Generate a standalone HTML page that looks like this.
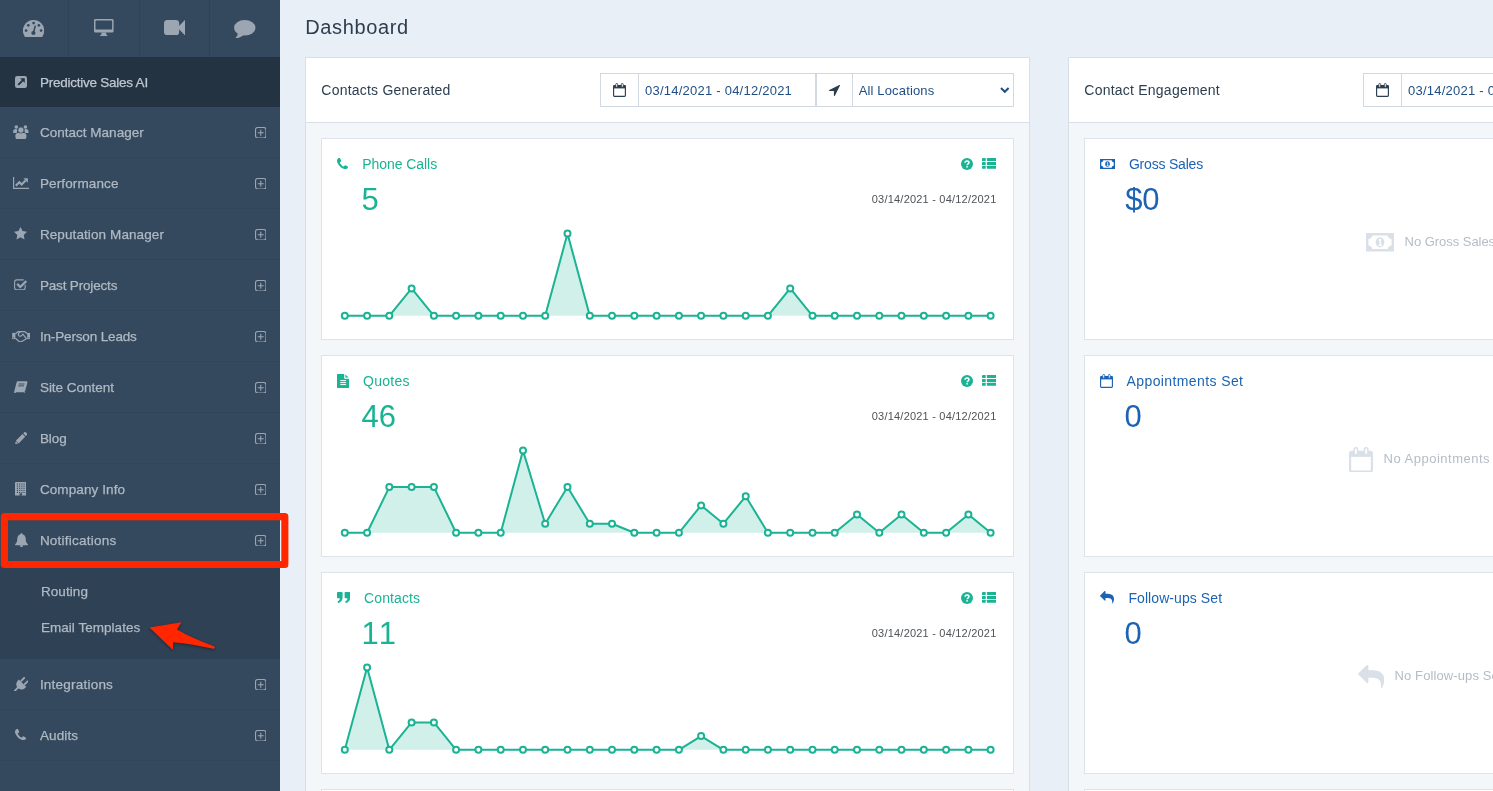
<!DOCTYPE html>
<html lang="en"><head><meta charset="utf-8"><title>Dashboard</title>
<style>
html,body{margin:0;padding:0}
body{width:1493px;height:791px;overflow:hidden;background:#e9eff6;font-family:"Liberation Sans", sans-serif;position:relative;-webkit-font-smoothing:antialiased}
*{box-sizing:border-box}
#sidebar,#main{will-change:transform}
#sidebar{position:absolute;left:0;top:0;width:280px;height:791px;background:#34495e;overflow:hidden}
.topbar{position:absolute;left:0;top:0;width:280px;height:57px}
.topbar a{position:absolute;top:0;width:70px;height:57px;border-right:1px solid #304459;display:block}
.nav-item span,.submenu span{-webkit-text-stroke:.25px currentColor}
.nav-item{position:absolute;left:0;width:280px;height:51px;border-bottom:1px solid #30445a}
.nav-item.active{background:#243342;border-bottom:none;height:50px}
.submenu{position:absolute;left:0;top:566px;width:280px;height:93px;background:#2f4155}
#main{position:absolute;left:280px;top:0;width:1213px;height:791px;overflow:hidden}
.panel{position:absolute;top:57px;width:725px;height:800px;background:#f4f7fa;border:1px solid #d8dfe7}
.panel-head{position:absolute;left:0;top:0;width:723px;height:65px;background:#fff;border-bottom:1px solid #d8dfe7}
.card{position:absolute;left:15px;width:693px;height:202px;background:#fff;border:1px solid #dce3ea}
.igroup{position:absolute;top:15px;height:34px;background:#fff;border:1px solid #d0d8e1}
</style></head><body>

<div id="sidebar">
<div class="topbar">
<a style="left:0px;width:69px;"><svg style="position:absolute;left:22.80px;top:19.90px;" width="21.2" height="17" viewBox="0 0 21.2 17"><path fill="#9ba6b2" d="M10.6 0A10.6 10.6 0 0 1 21.2 10.6c0 2.1-.6 4.1-1.7 5.8a1 1 0 0 1-.9.6H2.6a1 1 0 0 1-.9-.6A10.6 10.6 0 0 1 10.6 0z"/><g fill="#34495e"><circle cx="10.6" cy="3.1" r="1.35"/><circle cx="5.3" cy="5.3" r="1.35"/><circle cx="15.9" cy="5.3" r="1.35"/><circle cx="3.1" cy="10.6" r="1.35"/><circle cx="18.1" cy="10.6" r="1.35"/><circle cx="10.4" cy="13" r="2.1"/></g><path d="M10.5 12.6L12.2 6.2" stroke="#34495e" stroke-width="1.5" stroke-linecap="round"/></svg></a>
<a style="left:70px;"><svg style="position:absolute;left:24.40px;top:19.00px;" width="19.6" height="17.2" viewBox="0 0 19.6 17.2"><rect x="0" y="0" width="19.6" height="13.6" rx="1.5" fill="#9ba6b2"/><rect x="1.5" y="1.5" width="16.6" height="9" rx=".4" fill="#34495e"/><path fill="#9ba6b2" d="M7.6 13.6h4.4l.5 2.3h.9v1.3H6.2v-1.3h.9z"/></svg></a>
<a style="left:140px;"><svg style="position:absolute;left:24.10px;top:19.90px;" width="21.4" height="15.3" viewBox="0 0 21.4 15.3"><rect x="0" y="0" width="15.2" height="15.3" rx="3.4" fill="#9ba6b2"/><path fill="#9ba6b2" d="M14.6 6.6L20.6.3c.4-.4.8-.2.8.3v14.1c0 .5-.4.7-.8.3l-6-6.3z"/></svg></a>
<a style="left:210px;border-right:none;"><svg style="position:absolute;left:24.10px;top:19.90px;" width="21.5" height="18.4" viewBox="0 0 21.5 18.4"><ellipse cx="10.75" cy="7.7" rx="10.75" ry="7.7" fill="#9ba6b2"/><path fill="#9ba6b2" d="M4.2 12.5c-.3 2-1.300 4-2.800 5.500c-.2.200 0 .4.300.4c3.200-.3 5.800-1.600 7.800-3.400z"/></svg></a>
</div>
<div class="nav-item active" style="top:57px">
<svg style="position:absolute;left:15.00px;top:19.00px;" width="12" height="12" viewBox="0 0 12 12"><rect width="12" height="12" rx="2.2" fill="#9ba6b2"/><path fill="#243342" d="M5.200 2.300H9.800V6.900L8.200 5.300 3.900 9.600 2.500 8.200 6.800 3.900z"/></svg>
<span style="position:absolute;left:39.9px;top:15.92px;font-size:13.5px;line-height:20px;letter-spacing:-0.24px;color:#c0c8d0;white-space:nowrap;">Predictive Sales AI</span>
</div>
<div class="nav-item" style="top:107px">
<svg style="position:absolute;left:13.10px;top:17.80px;" width="15.8" height="14.4" viewBox="0 0 15.8 14.4"><g fill="#9ba6b2"><circle cx="3.300" cy="2.100" r="1.750"/><circle cx="12.400" cy="2.100" r="1.750"/><path d="M.1 6.900c0-1.700 1-2.800 2.400-2.800.9 0 1.600.3 2.100.9-.5.700-.8 1.600-.8 2.500v.6H1.400C.6 8.100.1 7.700.1 6.900z"/><path d="M15.600 6.900c0-1.700-1-2.800-2.400-2.800-.9 0-1.600.3-2.100.9.5.700.8 1.600.8 2.500v.6h2.400c.8 0 1.300-.4 1.300-1.200z"/><rect x="2.400" y="8" width="11" height="6.300" rx="2.500"/><circle cx="7.900" cy="5.100" r="3.050" stroke="#34495e" stroke-width=".7"/></g></svg>
<span style="position:absolute;left:39.9px;top:15.92px;font-size:13.5px;line-height:20px;letter-spacing:0.02px;color:#b0b9c3;white-space:nowrap;">Contact Manager</span>
<svg style="position:absolute;left:254.60px;top:19.90px;" width="11.5" height="11.5" viewBox="0 0 11.5 11.5"><rect x=".55" y=".55" width="10.400" height="10.400" rx="2.100" fill="none" stroke="#9ba6b2" stroke-width="1.100"/><path d="M5.750 2.800v5.900M2.800 5.750h5.900" stroke="#9ba6b2" stroke-width="1.100"/></svg>
</div>
<div class="nav-item" style="top:158px">
<svg style="position:absolute;left:13.00px;top:19.00px;" width="16" height="12" viewBox="0 0 16 12"><path d="M.6 0v11.300H16" fill="none" stroke="#9ba6b2" stroke-width="1.2"/><path d="M2.800 8.700L6.300 5.200l2.300 2.300L12.600 3.500" fill="none" stroke="#9ba6b2" stroke-width="2.100"/><path fill="#9ba6b2" d="M10.400 1.300h4.500v4.500z"/></svg>
<span style="position:absolute;left:39.9px;top:15.92px;font-size:13.5px;line-height:20px;letter-spacing:0.13px;color:#b0b9c3;white-space:nowrap;">Performance</span>
<svg style="position:absolute;left:254.60px;top:19.90px;" width="11.5" height="11.5" viewBox="0 0 11.5 11.5"><rect x=".55" y=".55" width="10.400" height="10.400" rx="2.100" fill="none" stroke="#9ba6b2" stroke-width="1.100"/><path d="M5.750 2.800v5.900M2.800 5.750h5.900" stroke="#9ba6b2" stroke-width="1.100"/></svg>
</div>
<div class="nav-item" style="top:209px">
<svg style="position:absolute;left:14.10px;top:18.30px;" width="13" height="12.5" viewBox="0 0 13 12.5"><path fill="#9ba6b2" d="M6.500 0l2 4.100 4.500.65-3.250 3.200.75 4.500L6.500 10.300 2.500 12.450l.75-4.500L0 4.750l4.500-.65z"/></svg>
<span style="position:absolute;left:39.9px;top:15.92px;font-size:13.5px;line-height:20px;letter-spacing:0.1px;color:#b0b9c3;white-space:nowrap;">Reputation Manager</span>
<svg style="position:absolute;left:254.60px;top:19.90px;" width="11.5" height="11.5" viewBox="0 0 11.5 11.5"><rect x=".55" y=".55" width="10.400" height="10.400" rx="2.100" fill="none" stroke="#9ba6b2" stroke-width="1.100"/><path d="M5.750 2.800v5.900M2.800 5.750h5.900" stroke="#9ba6b2" stroke-width="1.100"/></svg>
</div>
<div class="nav-item" style="top:260px">
<svg style="position:absolute;left:14.20px;top:18.60px;" width="13.2" height="11.8" viewBox="0 0 13.2 11.8"><path d="M11.200 5.700v3.100a2 2 0 0 1-2 2H2.600a2 2 0 0 1-2-2V2.900a2 2 0 0 1 2-2h7.100" fill="none" stroke="#9ba6b2" stroke-width="1.100"/><path d="M3.200 4.900l3.100 3.100L12.300 2" fill="none" stroke="#9ba6b2" stroke-width="2.300"/></svg>
<span style="position:absolute;left:39.9px;top:15.92px;font-size:13.5px;line-height:20px;letter-spacing:-0.17px;color:#b0b9c3;white-space:nowrap;">Past Projects</span>
<svg style="position:absolute;left:254.60px;top:19.90px;" width="11.5" height="11.5" viewBox="0 0 11.5 11.5"><rect x=".55" y=".55" width="10.400" height="10.400" rx="2.100" fill="none" stroke="#9ba6b2" stroke-width="1.100"/><path d="M5.750 2.800v5.900M2.800 5.750h5.900" stroke="#9ba6b2" stroke-width="1.100"/></svg>
</div>
<div class="nav-item" style="top:311px">
<svg style="position:absolute;left:11.70px;top:19.90px;" width="18.4" height="11.5" viewBox="0 0 18.4 11.5"><rect x=".2" y="1.9" width="3.2" height="6.2" fill="#9ba6b2"/><rect x="15.2" y="1.9" width="3.2" height="6.2" fill="#9ba6b2"/><circle cx="1.7" cy="6.7" r=".55" fill="#34495e"/><circle cx="16.9" cy="6.7" r=".55" fill="#34495e"/><path d="M3.4 2.7L5.9.7H13L15.3 2.7M3.4 7.3L6.9 10.2c.9.7 2.300.7 3.200 0L15.300 7.300" fill="none" stroke="#9ba6b2" stroke-width="1.200" stroke-linejoin="round"/><path d="M8.100 1C6.600 2.100 6.100 3.500 6.500 4.300c.6 1.200 2.200 1.200 3 .3L10.900 3.100l2.900 3.700" fill="none" stroke="#9ba6b2" stroke-width="1.200" stroke-linecap="round" stroke-linejoin="round"/></svg>
<span style="position:absolute;left:39.9px;top:15.92px;font-size:13.5px;line-height:20px;letter-spacing:-0.15px;color:#b0b9c3;white-space:nowrap;">In-Person Leads</span>
<svg style="position:absolute;left:254.60px;top:19.90px;" width="11.5" height="11.5" viewBox="0 0 11.5 11.5"><rect x=".55" y=".55" width="10.400" height="10.400" rx="2.100" fill="none" stroke="#9ba6b2" stroke-width="1.100"/><path d="M5.750 2.800v5.900M2.800 5.750h5.900" stroke="#9ba6b2" stroke-width="1.100"/></svg>
</div>
<div class="nav-item" style="top:362px">
<svg style="position:absolute;left:14.20px;top:18.50px;" width="13.5" height="12.8" viewBox="0 0 13.5 12.8"><path fill="#9ba6b2" d="M3.700.2h8.700c.8 0 1.200.6 1 1.300l-2.200 8.300c-.2.800-.8 1.300-1.600 1.300H2c-.4 0-.6.300-.3.500.2.200.5.2.8.200h7.700l.500-.8.600.4-.5 1c-.2.300-.5.400-.9.400H1.800C.5 12.800-.2 11.700.2 10.500L2.500 1.700C2.700.8 3.100.2 3.700.2z"/><path d="M4.700 3h5.800M4.200 4.900H10" stroke="#34495e" stroke-width=".9"/></svg>
<span style="position:absolute;left:39.9px;top:15.92px;font-size:13.5px;line-height:20px;letter-spacing:-0.01px;color:#b0b9c3;white-space:nowrap;">Site Content</span>
<svg style="position:absolute;left:254.60px;top:19.90px;" width="11.5" height="11.5" viewBox="0 0 11.5 11.5"><rect x=".55" y=".55" width="10.400" height="10.400" rx="2.100" fill="none" stroke="#9ba6b2" stroke-width="1.100"/><path d="M5.750 2.800v5.900M2.800 5.750h5.900" stroke="#9ba6b2" stroke-width="1.100"/></svg>
</div>
<div class="nav-item" style="top:413px">
<svg style="position:absolute;left:14.70px;top:18.80px;" width="12.4" height="12.4" viewBox="0 0 12.4 12.4"><path fill="#9ba6b2" d="M9.300.3c.4-.4 1-.4 1.400 0l1.300 1.300c.4.400.4 1 0 1.400l-1.100 1.100L8.200 1.400zM7.500 2.100l2.700 2.700-6.400 6.400L0 12.300l1.100-3.800z"/><path d="M1.100 9.200l2 2" stroke="#34495e" stroke-width=".7"/></svg>
<span style="position:absolute;left:39.9px;top:15.92px;font-size:13.5px;line-height:20px;letter-spacing:-0.04px;color:#b0b9c3;white-space:nowrap;">Blog</span>
<svg style="position:absolute;left:254.60px;top:19.90px;" width="11.5" height="11.5" viewBox="0 0 11.5 11.5"><rect x=".55" y=".55" width="10.400" height="10.400" rx="2.100" fill="none" stroke="#9ba6b2" stroke-width="1.100"/><path d="M5.750 2.800v5.900M2.800 5.750h5.900" stroke="#9ba6b2" stroke-width="1.100"/></svg>
</div>
<div class="nav-item" style="top:464px">
<svg style="position:absolute;left:14.70px;top:18.00px;" width="11.5" height="13.6" viewBox="0 0 11.5 13.6"><rect x="0" y="0" width="11.500" height="13.600" rx=".5" fill="#9ba6b2"/><rect x="1.9" y="1.5" width="1.100" height="1.100" fill="#34495e"/><rect x="4.1" y="1.5" width="1.100" height="1.100" fill="#34495e"/><rect x="6.3" y="1.5" width="1.100" height="1.100" fill="#34495e"/><rect x="8.5" y="1.5" width="1.100" height="1.100" fill="#34495e"/><rect x="1.9" y="3.6" width="1.100" height="1.100" fill="#34495e"/><rect x="4.1" y="3.6" width="1.100" height="1.100" fill="#34495e"/><rect x="6.3" y="3.6" width="1.100" height="1.100" fill="#34495e"/><rect x="8.5" y="3.6" width="1.100" height="1.100" fill="#34495e"/><rect x="1.9" y="5.7" width="1.100" height="1.100" fill="#34495e"/><rect x="4.1" y="5.7" width="1.100" height="1.100" fill="#34495e"/><rect x="6.3" y="5.7" width="1.100" height="1.100" fill="#34495e"/><rect x="8.5" y="5.7" width="1.100" height="1.100" fill="#34495e"/><rect x="1.9" y="7.8" width="1.100" height="1.100" fill="#34495e"/><rect x="4.1" y="7.8" width="1.100" height="1.100" fill="#34495e"/><rect x="6.3" y="7.8" width="1.100" height="1.100" fill="#34495e"/><rect x="8.5" y="7.8" width="1.100" height="1.100" fill="#34495e"/><rect x="1.9" y="9.9" width="1.100" height="1.100" fill="#34495e"/><rect x="4.1" y="9.9" width="1.100" height="1.100" fill="#34495e"/><rect x="6.3" y="9.9" width="1.100" height="1.100" fill="#34495e"/><rect x="8.5" y="9.9" width="1.100" height="1.100" fill="#34495e"/><rect x="4.500" y="11.400" width="2.500" height="2.200" fill="#34495e"/></svg>
<span style="position:absolute;left:39.9px;top:15.92px;font-size:13.5px;line-height:20px;letter-spacing:0.1px;color:#b0b9c3;white-space:nowrap;">Company Info</span>
<svg style="position:absolute;left:254.60px;top:19.90px;" width="11.5" height="11.5" viewBox="0 0 11.5 11.5"><rect x=".55" y=".55" width="10.400" height="10.400" rx="2.100" fill="none" stroke="#9ba6b2" stroke-width="1.100"/><path d="M5.750 2.800v5.900M2.800 5.750h5.900" stroke="#9ba6b2" stroke-width="1.100"/></svg>
</div>
<div class="nav-item" style="top:515px">
<svg style="position:absolute;left:14.50px;top:17.90px;" width="13" height="14.2" viewBox="0 0 13 14.2"><path fill="#9ba6b2" d="M6.500 0c.5 0 .9.400.9.900v.3c2 .4 3.300 2.200 3.300 4.300 0 3.300.9 4.700 2.100 5.700.2.200.2.400.2.500 0 .3-.2.500-.500.500H.5c-.3 0-.5-.2-.5-.5 0-.1 0-.3.2-.5 1.200-1 2.100-2.400 2.100-5.700 0-2.100 1.300-3.900 3.300-4.300V.9c0-.5.400-.9.900-.9z"/><path fill="#9ba6b2" d="M4.800 12.200h3.400c0 1.200-.7 2-1.700 2s-1.700-.8-1.700-2z"/></svg>
<span style="position:absolute;left:39.9px;top:15.92px;font-size:13.5px;line-height:20px;letter-spacing:0.23px;color:#b0b9c3;white-space:nowrap;">Notifications</span>
<svg style="position:absolute;left:254.60px;top:19.90px;" width="11.5" height="11.5" viewBox="0 0 11.5 11.5"><rect x=".55" y=".55" width="10.400" height="10.400" rx="2.100" fill="none" stroke="#9ba6b2" stroke-width="1.100"/><path d="M5.750 2.800v5.900M2.800 5.750h5.900" stroke="#9ba6b2" stroke-width="1.100"/></svg>
</div>
<div class="nav-item" style="top:659px">
<svg style="position:absolute;left:13.60px;top:17.70px;" width="14.8" height="14.6" viewBox="0 0 14.8 14.6"><g stroke="#9ba6b2" stroke-linecap="round"><path d="M10.100 1L7.300 3.800M13.600 4.400L10.800 7.200" stroke-width="1.900"/><path d="M4.600 9.900L1 13.600" stroke-width="1.900"/></g><path fill="#9ba6b2" d="M4.700 2.600L12.200 9.800L11.100 10.900A5.130 5.130 0 0 1 3.700 3.700z"/></svg>
<span style="position:absolute;left:39.9px;top:15.92px;font-size:13.5px;line-height:20px;letter-spacing:0.22px;color:#b0b9c3;white-space:nowrap;">Integrations</span>
<svg style="position:absolute;left:254.60px;top:19.90px;" width="11.5" height="11.5" viewBox="0 0 11.5 11.5"><rect x=".55" y=".55" width="10.400" height="10.400" rx="2.100" fill="none" stroke="#9ba6b2" stroke-width="1.100"/><path d="M5.750 2.800v5.900M2.800 5.750h5.900" stroke="#9ba6b2" stroke-width="1.100"/></svg>
</div>
<div class="nav-item" style="top:710px">
<svg style="position:absolute;left:15.40px;top:19.00px;" width="11" height="11.2" viewBox="0 0 11 11.2"><path fill="#9ba6b2" d="M11 8.700c0 .3-.1.900-.2 1.200-.2.400-.6.700-1 .9-.500.200-1 .4-1.500.4-1.200 0-2.300-.6-3.300-1.200C3.300 8.900 2.100 7.700 1.200 6 .6 5 0 3.900 0 2.700c0-.5.200-1 .4-1.500.2-.4.500-.8.900-1C1.600.1 2.200 0 2.500 0c.1 0 .2 0 .3.100.3.100.9 1.500 1 1.800.2.400.4.700.4 1.100 0 .6-.9 1-1.200 1.300-.1.100-.2.300-.2.400 0 .1.100.3.100.4.500.9 1.100 1.700 2 2.400.3.300.8.700 1.200.9.100.1.300.1.400.1.400 0 1-.9 1.400-1.100.1-.1.200-.1.300-.1.400 0 .8.300 1.100.5.400.2 1.600.7 1.700 1z"/></svg>
<span style="position:absolute;left:39.9px;top:15.92px;font-size:13.5px;line-height:20px;letter-spacing:0.13px;color:#b0b9c3;white-space:nowrap;">Audits</span>
<svg style="position:absolute;left:254.60px;top:19.90px;" width="11.5" height="11.5" viewBox="0 0 11.5 11.5"><rect x=".55" y=".55" width="10.400" height="10.400" rx="2.100" fill="none" stroke="#9ba6b2" stroke-width="1.100"/><path d="M5.750 2.800v5.900M2.800 5.750h5.900" stroke="#9ba6b2" stroke-width="1.100"/></svg>
</div>
<div class="submenu">
<span style="position:absolute;left:40.9px;top:15.52px;font-size:13.5px;line-height:20px;letter-spacing:0.09px;color:#b0b9c3;white-space:nowrap;">Routing</span>
<span style="position:absolute;left:40.9px;top:51.52px;font-size:13.5px;line-height:20px;letter-spacing:0.04px;color:#b0b9c3;white-space:nowrap;">Email Templates</span>
</div>
</div>
<div id="main">
<span style="position:absolute;left:25.2px;top:12.17px;font-size:20px;line-height:30px;letter-spacing:0.64px;color:#2c3e50;white-space:nowrap;">Dashboard</span>
<section class="panel" style="left:25px">
<header class="panel-head">
<span style="position:absolute;left:15.3px;top:22.15px;font-size:14px;line-height:20px;letter-spacing:0.22px;color:#2c3e50;white-space:nowrap;">Contacts Generated</span>
<div class="igroup" style="left:294px;width:216px">
<span style="position:absolute;left:0;top:0;width:38px;height:32px;border-right:1px solid #d0d8e1;display:block"><svg style="position:absolute;left:11.50px;top:9.00px;" width="13" height="14" viewBox="0 0 13 14"><rect x=".6" y="2.600" width="11.800" height="10.800" rx=".8" fill="#fff" stroke="#2c3e50" stroke-width="1.150"/><rect x=".6" y="2.600" width="11.800" height="2.800" fill="#2c3e50"/><rect x="2.750" y=".4" width="1.900" height="3.900" rx=".95" fill="#fff" stroke="#2c3e50" stroke-width=".85"/><rect x="8.350" y=".4" width="1.900" height="3.900" rx=".95" fill="#fff" stroke="#2c3e50" stroke-width=".85"/></svg></span>
<span style="position:absolute;left:44.1px;top:7.00px;font-size:13px;line-height:20px;letter-spacing:0.23px;color:#1f4e85;white-space:nowrap;">03/14/2021 - 04/12/2021</span>
</div>
<div class="igroup" style="left:510px;width:198px">
<span style="position:absolute;left:0;top:0;width:36px;height:32px;border-right:1px solid #d0d8e1;display:block"><svg style="position:absolute;left:11.90px;top:10.90px;" width="11" height="11.2" viewBox="0 0 11 11.2"><path fill="#2c3e50" d="M10.900.7L5.900 10.700c-.1.200-.3.300-.5.300h-.1c-.2-.1-.4-.3-.4-.5V6H.5C.3 6 .1 5.900 0 5.600c0-.2.100-.5.300-.6l10-5c.2-.1.400 0 .6.100.1.200.2.400 0 .6z"/></svg></span>
<span style="position:absolute;left:41.7px;top:7.00px;font-size:13px;line-height:20px;letter-spacing:0.15px;color:#1f4e85;white-space:nowrap;">All Locations</span>
<svg style="position:absolute;left:183.20px;top:13.00px;" width="9.6" height="6.5" viewBox="0 0 9.6 6.5"><path d="M1 1l3.800 3.800L8.600 1" fill="none" stroke="#1f4e85" stroke-width="2"/></svg>
</div>
</header>
<article class="card" style="top:80px">
<svg style="position:absolute;left:14.60px;top:18.80px;" width="11" height="11.2" viewBox="0 0 11 11.2"><path fill="#1ab394" d="M11 8.700c0 .3-.1.900-.2 1.200-.2.400-.6.700-1 .9-.500.200-1 .4-1.500.4-1.200 0-2.300-.6-3.300-1.200C3.300 8.900 2.100 7.700 1.200 6 .6 5 0 3.900 0 2.700c0-.5.200-1 .4-1.500.2-.4.500-.8.900-1C1.600.1 2.200 0 2.500 0c.1 0 .2 0 .3.100.3.100.9 1.500 1 1.800.2.400.4.700.4 1.100 0 .6-.9 1-1.200 1.300-.1.100-.2.300-.2.400 0 .1.100.3.100.4.500.9 1.100 1.700 2 2.400.3.300.8.700 1.200.9.100.1.300.1.400.1.400 0 1-.9 1.400-1.100.1-.1.200-.1.300-.1.400 0 .8.300 1.100.5.400.2 1.600.7 1.700 1z"/></svg>
<span style="position:absolute;left:40.2px;top:14.95px;font-size:14px;line-height:20px;letter-spacing:-0.05px;color:#1ab394;white-space:nowrap;">Phone Calls</span>
<span style="position:absolute;left:39.6px;top:43.26px;font-size:31px;line-height:36px;letter-spacing:-0.05px;color:#1ab394;white-space:nowrap;">5</span>
<svg style="position:absolute;left:639.10px;top:18.90px;" width="12" height="12" viewBox="0 0 12 12"><circle cx="6" cy="6" r="6" fill="#1ab394"/><path d="M4.100 4.700c0-1.100.8-1.800 1.900-1.800s2 .7 2 1.700c0 1.300-1.800 1.300-1.800 2.600" fill="none" stroke="#fff" stroke-width="1.500"/><rect x="5.300" y="8.100" width="1.500" height="1.500" fill="#fff"/></svg>
<svg style="position:absolute;left:659.60px;top:19.00px;" width="14.5" height="10.9" viewBox="0 0 14.5 10.9"><rect x="0" y="0.0" width="3.700" height="3" rx=".5" fill="#1ab394"/><rect x="4.900" y="0.0" width="9.600" height="3" rx=".5" fill="#1ab394"/><rect x="0" y="3.9" width="3.700" height="3" rx=".5" fill="#1ab394"/><rect x="4.900" y="3.9" width="9.600" height="3" rx=".5" fill="#1ab394"/><rect x="0" y="7.8" width="3.700" height="3" rx=".5" fill="#1ab394"/><rect x="4.900" y="7.8" width="9.600" height="3" rx=".5" fill="#1ab394"/></svg>
<span style="position:absolute;left:549.8px;top:52.19px;font-size:11px;line-height:16px;letter-spacing:0.21px;color:#4f5357;white-space:nowrap;">03/14/2021 - 04/12/2021</span>
<svg style="position:absolute;left:0;top:0" width="691" height="200" viewBox="0 0 691 200"><polygon points="22.8,176.8 22.8,176.8 45.1,176.8 67.3,176.8 89.6,149.4 111.9,176.8 134.1,176.8 156.4,176.8 178.7,176.8 201.0,176.8 223.2,176.8 245.5,94.6 267.8,176.8 290.0,176.8 312.3,176.8 334.6,176.8 356.9,176.8 379.1,176.8 401.4,176.8 423.7,176.8 445.9,176.8 468.2,149.4 490.5,176.8 512.7,176.8 535.0,176.8 557.3,176.8 579.5,176.8 601.8,176.8 624.1,176.8 646.4,176.8 668.6,176.8 668.6,176.8" fill="#d1f0ea"/><polyline points="22.8,176.8 45.1,176.8 67.3,176.8 89.6,149.4 111.9,176.8 134.1,176.8 156.4,176.8 178.7,176.8 201.0,176.8 223.2,176.8 245.5,94.6 267.8,176.8 290.0,176.8 312.3,176.8 334.6,176.8 356.9,176.8 379.1,176.8 401.4,176.8 423.7,176.8 445.9,176.8 468.2,149.4 490.5,176.8 512.7,176.8 535.0,176.8 557.3,176.8 579.5,176.8 601.8,176.8 624.1,176.8 646.4,176.8 668.6,176.8" fill="none" stroke="#1ab394" stroke-width="2" stroke-linejoin="round"/><circle cx="22.8" cy="176.8" r="3" fill="#fff" stroke="#1ab394" stroke-width="2"/><circle cx="45.1" cy="176.8" r="3" fill="#fff" stroke="#1ab394" stroke-width="2"/><circle cx="67.3" cy="176.8" r="3" fill="#fff" stroke="#1ab394" stroke-width="2"/><circle cx="89.6" cy="149.4" r="3" fill="#fff" stroke="#1ab394" stroke-width="2"/><circle cx="111.9" cy="176.8" r="3" fill="#fff" stroke="#1ab394" stroke-width="2"/><circle cx="134.1" cy="176.8" r="3" fill="#fff" stroke="#1ab394" stroke-width="2"/><circle cx="156.4" cy="176.8" r="3" fill="#fff" stroke="#1ab394" stroke-width="2"/><circle cx="178.7" cy="176.8" r="3" fill="#fff" stroke="#1ab394" stroke-width="2"/><circle cx="201.0" cy="176.8" r="3" fill="#fff" stroke="#1ab394" stroke-width="2"/><circle cx="223.2" cy="176.8" r="3" fill="#fff" stroke="#1ab394" stroke-width="2"/><circle cx="245.5" cy="94.6" r="3" fill="#fff" stroke="#1ab394" stroke-width="2"/><circle cx="267.8" cy="176.8" r="3" fill="#fff" stroke="#1ab394" stroke-width="2"/><circle cx="290.0" cy="176.8" r="3" fill="#fff" stroke="#1ab394" stroke-width="2"/><circle cx="312.3" cy="176.8" r="3" fill="#fff" stroke="#1ab394" stroke-width="2"/><circle cx="334.6" cy="176.8" r="3" fill="#fff" stroke="#1ab394" stroke-width="2"/><circle cx="356.9" cy="176.8" r="3" fill="#fff" stroke="#1ab394" stroke-width="2"/><circle cx="379.1" cy="176.8" r="3" fill="#fff" stroke="#1ab394" stroke-width="2"/><circle cx="401.4" cy="176.8" r="3" fill="#fff" stroke="#1ab394" stroke-width="2"/><circle cx="423.7" cy="176.8" r="3" fill="#fff" stroke="#1ab394" stroke-width="2"/><circle cx="445.9" cy="176.8" r="3" fill="#fff" stroke="#1ab394" stroke-width="2"/><circle cx="468.2" cy="149.4" r="3" fill="#fff" stroke="#1ab394" stroke-width="2"/><circle cx="490.5" cy="176.8" r="3" fill="#fff" stroke="#1ab394" stroke-width="2"/><circle cx="512.7" cy="176.8" r="3" fill="#fff" stroke="#1ab394" stroke-width="2"/><circle cx="535.0" cy="176.8" r="3" fill="#fff" stroke="#1ab394" stroke-width="2"/><circle cx="557.3" cy="176.8" r="3" fill="#fff" stroke="#1ab394" stroke-width="2"/><circle cx="579.5" cy="176.8" r="3" fill="#fff" stroke="#1ab394" stroke-width="2"/><circle cx="601.8" cy="176.8" r="3" fill="#fff" stroke="#1ab394" stroke-width="2"/><circle cx="624.1" cy="176.8" r="3" fill="#fff" stroke="#1ab394" stroke-width="2"/><circle cx="646.4" cy="176.8" r="3" fill="#fff" stroke="#1ab394" stroke-width="2"/><circle cx="668.6" cy="176.8" r="3" fill="#fff" stroke="#1ab394" stroke-width="2"/></svg>
</article>
<article class="card" style="top:297px">
<svg style="position:absolute;left:14.60px;top:17.90px;" width="12" height="14" viewBox="0 0 12 14"><path fill="#1ab394" d="M.6 0h6.600v4.200c0 .4.300.6.600.6H12v8.600c0 .3-.3.600-.6.600H.6c-.3 0-.6-.3-.6-.6V.6C0 .3.300 0 .6 0zM8.400.6l3.200 3H8.400z"/><path d="M3.300 6.600h5.800M3.300 8.600h5.800M3.300 10.600h5.800" stroke="#fff" stroke-width="1"/></svg>
<span style="position:absolute;left:41.0px;top:14.95px;font-size:14px;line-height:20px;letter-spacing:0.29px;color:#1ab394;white-space:nowrap;">Quotes</span>
<span style="position:absolute;left:39.6px;top:43.26px;font-size:31px;line-height:36px;letter-spacing:-0.18px;color:#1ab394;white-space:nowrap;">46</span>
<svg style="position:absolute;left:639.10px;top:18.90px;" width="12" height="12" viewBox="0 0 12 12"><circle cx="6" cy="6" r="6" fill="#1ab394"/><path d="M4.100 4.700c0-1.100.8-1.800 1.900-1.800s2 .7 2 1.700c0 1.300-1.800 1.300-1.800 2.600" fill="none" stroke="#fff" stroke-width="1.500"/><rect x="5.300" y="8.100" width="1.500" height="1.500" fill="#fff"/></svg>
<svg style="position:absolute;left:659.60px;top:19.00px;" width="14.5" height="10.9" viewBox="0 0 14.5 10.9"><rect x="0" y="0.0" width="3.700" height="3" rx=".5" fill="#1ab394"/><rect x="4.900" y="0.0" width="9.600" height="3" rx=".5" fill="#1ab394"/><rect x="0" y="3.9" width="3.700" height="3" rx=".5" fill="#1ab394"/><rect x="4.900" y="3.9" width="9.600" height="3" rx=".5" fill="#1ab394"/><rect x="0" y="7.8" width="3.700" height="3" rx=".5" fill="#1ab394"/><rect x="4.900" y="7.8" width="9.600" height="3" rx=".5" fill="#1ab394"/></svg>
<span style="position:absolute;left:549.8px;top:52.19px;font-size:11px;line-height:16px;letter-spacing:0.21px;color:#4f5357;white-space:nowrap;">03/14/2021 - 04/12/2021</span>
<svg style="position:absolute;left:0;top:0" width="691" height="200" viewBox="0 0 691 200"><polygon points="22.8,176.8 22.8,176.8 45.1,176.8 67.3,131.1 89.6,131.1 111.9,131.1 134.1,176.8 156.4,176.8 178.7,176.8 201.0,94.6 223.2,167.7 245.5,131.1 267.8,167.7 290.0,167.7 312.3,176.8 334.6,176.8 356.9,176.8 379.1,149.4 401.4,167.7 423.7,140.3 445.9,176.8 468.2,176.8 490.5,176.8 512.7,176.8 535.0,158.5 557.3,176.8 579.5,158.5 601.8,176.8 624.1,176.8 646.4,158.5 668.6,176.8 668.6,176.8" fill="#d1f0ea"/><polyline points="22.8,176.8 45.1,176.8 67.3,131.1 89.6,131.1 111.9,131.1 134.1,176.8 156.4,176.8 178.7,176.8 201.0,94.6 223.2,167.7 245.5,131.1 267.8,167.7 290.0,167.7 312.3,176.8 334.6,176.8 356.9,176.8 379.1,149.4 401.4,167.7 423.7,140.3 445.9,176.8 468.2,176.8 490.5,176.8 512.7,176.8 535.0,158.5 557.3,176.8 579.5,158.5 601.8,176.8 624.1,176.8 646.4,158.5 668.6,176.8" fill="none" stroke="#1ab394" stroke-width="2" stroke-linejoin="round"/><circle cx="22.8" cy="176.8" r="3" fill="#fff" stroke="#1ab394" stroke-width="2"/><circle cx="45.1" cy="176.8" r="3" fill="#fff" stroke="#1ab394" stroke-width="2"/><circle cx="67.3" cy="131.1" r="3" fill="#fff" stroke="#1ab394" stroke-width="2"/><circle cx="89.6" cy="131.1" r="3" fill="#fff" stroke="#1ab394" stroke-width="2"/><circle cx="111.9" cy="131.1" r="3" fill="#fff" stroke="#1ab394" stroke-width="2"/><circle cx="134.1" cy="176.8" r="3" fill="#fff" stroke="#1ab394" stroke-width="2"/><circle cx="156.4" cy="176.8" r="3" fill="#fff" stroke="#1ab394" stroke-width="2"/><circle cx="178.7" cy="176.8" r="3" fill="#fff" stroke="#1ab394" stroke-width="2"/><circle cx="201.0" cy="94.6" r="3" fill="#fff" stroke="#1ab394" stroke-width="2"/><circle cx="223.2" cy="167.7" r="3" fill="#fff" stroke="#1ab394" stroke-width="2"/><circle cx="245.5" cy="131.1" r="3" fill="#fff" stroke="#1ab394" stroke-width="2"/><circle cx="267.8" cy="167.7" r="3" fill="#fff" stroke="#1ab394" stroke-width="2"/><circle cx="290.0" cy="167.7" r="3" fill="#fff" stroke="#1ab394" stroke-width="2"/><circle cx="312.3" cy="176.8" r="3" fill="#fff" stroke="#1ab394" stroke-width="2"/><circle cx="334.6" cy="176.8" r="3" fill="#fff" stroke="#1ab394" stroke-width="2"/><circle cx="356.9" cy="176.8" r="3" fill="#fff" stroke="#1ab394" stroke-width="2"/><circle cx="379.1" cy="149.4" r="3" fill="#fff" stroke="#1ab394" stroke-width="2"/><circle cx="401.4" cy="167.7" r="3" fill="#fff" stroke="#1ab394" stroke-width="2"/><circle cx="423.7" cy="140.3" r="3" fill="#fff" stroke="#1ab394" stroke-width="2"/><circle cx="445.9" cy="176.8" r="3" fill="#fff" stroke="#1ab394" stroke-width="2"/><circle cx="468.2" cy="176.8" r="3" fill="#fff" stroke="#1ab394" stroke-width="2"/><circle cx="490.5" cy="176.8" r="3" fill="#fff" stroke="#1ab394" stroke-width="2"/><circle cx="512.7" cy="176.8" r="3" fill="#fff" stroke="#1ab394" stroke-width="2"/><circle cx="535.0" cy="158.5" r="3" fill="#fff" stroke="#1ab394" stroke-width="2"/><circle cx="557.3" cy="176.8" r="3" fill="#fff" stroke="#1ab394" stroke-width="2"/><circle cx="579.5" cy="158.5" r="3" fill="#fff" stroke="#1ab394" stroke-width="2"/><circle cx="601.8" cy="176.8" r="3" fill="#fff" stroke="#1ab394" stroke-width="2"/><circle cx="624.1" cy="176.8" r="3" fill="#fff" stroke="#1ab394" stroke-width="2"/><circle cx="646.4" cy="158.5" r="3" fill="#fff" stroke="#1ab394" stroke-width="2"/><circle cx="668.6" cy="176.8" r="3" fill="#fff" stroke="#1ab394" stroke-width="2"/></svg>
</article>
<article class="card" style="top:514px">
<svg style="position:absolute;left:14.60px;top:19.10px;" width="13.5" height="11" viewBox="0 0 13.5 11"><path fill="#1ab394" d="M0 .8C0 .4.400 0 .8 0h4c.4 0 .8.400.8.800v4.500c0 3-1.600 5.200-4.300 5.700-.3.100-.5-.2-.5-.4V9.500c0-.2.100-.4.400-.5 1-.4 1.600-1.300 1.600-2.300 0-.3-.2-.5-.5-.5H.8c-.4 0-.8-.4-.8-.8z"/><path fill="#1ab394" transform="translate(7.600 0)" d="M0 .8C0 .4.400 0 .8 0h4c.4 0 .8.400.8.800v4.500c0 3-1.600 5.200-4.300 5.700-.3.100-.5-.2-.5-.4V9.500c0-.2.100-.4.400-.5 1-.4 1.600-1.300 1.600-2.300 0-.3-.2-.5-.5-.5H.8c-.4 0-.8-.4-.8-.8z"/></svg>
<span style="position:absolute;left:42.0px;top:14.95px;font-size:14px;line-height:20px;letter-spacing:0.12px;color:#1ab394;white-space:nowrap;">Contacts</span>
<span style="position:absolute;left:39.6px;top:43.26px;font-size:31px;line-height:36px;letter-spacing:2.11px;color:#1ab394;white-space:nowrap;">11</span>
<svg style="position:absolute;left:639.10px;top:18.90px;" width="12" height="12" viewBox="0 0 12 12"><circle cx="6" cy="6" r="6" fill="#1ab394"/><path d="M4.100 4.700c0-1.100.8-1.800 1.900-1.800s2 .7 2 1.700c0 1.300-1.800 1.300-1.800 2.600" fill="none" stroke="#fff" stroke-width="1.500"/><rect x="5.300" y="8.100" width="1.500" height="1.500" fill="#fff"/></svg>
<svg style="position:absolute;left:659.60px;top:19.00px;" width="14.5" height="10.9" viewBox="0 0 14.5 10.9"><rect x="0" y="0.0" width="3.700" height="3" rx=".5" fill="#1ab394"/><rect x="4.900" y="0.0" width="9.600" height="3" rx=".5" fill="#1ab394"/><rect x="0" y="3.9" width="3.700" height="3" rx=".5" fill="#1ab394"/><rect x="4.900" y="3.9" width="9.600" height="3" rx=".5" fill="#1ab394"/><rect x="0" y="7.8" width="3.700" height="3" rx=".5" fill="#1ab394"/><rect x="4.900" y="7.8" width="9.600" height="3" rx=".5" fill="#1ab394"/></svg>
<span style="position:absolute;left:549.8px;top:52.19px;font-size:11px;line-height:16px;letter-spacing:0.21px;color:#4f5357;white-space:nowrap;">03/14/2021 - 04/12/2021</span>
<svg style="position:absolute;left:0;top:0" width="691" height="200" viewBox="0 0 691 200"><polygon points="22.8,176.8 22.8,176.8 45.1,94.6 67.3,176.8 89.6,149.4 111.9,149.4 134.1,176.8 156.4,176.8 178.7,176.8 201.0,176.8 223.2,176.8 245.5,176.8 267.8,176.8 290.0,176.8 312.3,176.8 334.6,176.8 356.9,176.8 379.1,163.1 401.4,176.8 423.7,176.8 445.9,176.8 468.2,176.8 490.5,176.8 512.7,176.8 535.0,176.8 557.3,176.8 579.5,176.8 601.8,176.8 624.1,176.8 646.4,176.8 668.6,176.8 668.6,176.8" fill="#d1f0ea"/><polyline points="22.8,176.8 45.1,94.6 67.3,176.8 89.6,149.4 111.9,149.4 134.1,176.8 156.4,176.8 178.7,176.8 201.0,176.8 223.2,176.8 245.5,176.8 267.8,176.8 290.0,176.8 312.3,176.8 334.6,176.8 356.9,176.8 379.1,163.1 401.4,176.8 423.7,176.8 445.9,176.8 468.2,176.8 490.5,176.8 512.7,176.8 535.0,176.8 557.3,176.8 579.5,176.8 601.8,176.8 624.1,176.8 646.4,176.8 668.6,176.8" fill="none" stroke="#1ab394" stroke-width="2" stroke-linejoin="round"/><circle cx="22.8" cy="176.8" r="3" fill="#fff" stroke="#1ab394" stroke-width="2"/><circle cx="45.1" cy="94.6" r="3" fill="#fff" stroke="#1ab394" stroke-width="2"/><circle cx="67.3" cy="176.8" r="3" fill="#fff" stroke="#1ab394" stroke-width="2"/><circle cx="89.6" cy="149.4" r="3" fill="#fff" stroke="#1ab394" stroke-width="2"/><circle cx="111.9" cy="149.4" r="3" fill="#fff" stroke="#1ab394" stroke-width="2"/><circle cx="134.1" cy="176.8" r="3" fill="#fff" stroke="#1ab394" stroke-width="2"/><circle cx="156.4" cy="176.8" r="3" fill="#fff" stroke="#1ab394" stroke-width="2"/><circle cx="178.7" cy="176.8" r="3" fill="#fff" stroke="#1ab394" stroke-width="2"/><circle cx="201.0" cy="176.8" r="3" fill="#fff" stroke="#1ab394" stroke-width="2"/><circle cx="223.2" cy="176.8" r="3" fill="#fff" stroke="#1ab394" stroke-width="2"/><circle cx="245.5" cy="176.8" r="3" fill="#fff" stroke="#1ab394" stroke-width="2"/><circle cx="267.8" cy="176.8" r="3" fill="#fff" stroke="#1ab394" stroke-width="2"/><circle cx="290.0" cy="176.8" r="3" fill="#fff" stroke="#1ab394" stroke-width="2"/><circle cx="312.3" cy="176.8" r="3" fill="#fff" stroke="#1ab394" stroke-width="2"/><circle cx="334.6" cy="176.8" r="3" fill="#fff" stroke="#1ab394" stroke-width="2"/><circle cx="356.9" cy="176.8" r="3" fill="#fff" stroke="#1ab394" stroke-width="2"/><circle cx="379.1" cy="163.1" r="3" fill="#fff" stroke="#1ab394" stroke-width="2"/><circle cx="401.4" cy="176.8" r="3" fill="#fff" stroke="#1ab394" stroke-width="2"/><circle cx="423.7" cy="176.8" r="3" fill="#fff" stroke="#1ab394" stroke-width="2"/><circle cx="445.9" cy="176.8" r="3" fill="#fff" stroke="#1ab394" stroke-width="2"/><circle cx="468.2" cy="176.8" r="3" fill="#fff" stroke="#1ab394" stroke-width="2"/><circle cx="490.5" cy="176.8" r="3" fill="#fff" stroke="#1ab394" stroke-width="2"/><circle cx="512.7" cy="176.8" r="3" fill="#fff" stroke="#1ab394" stroke-width="2"/><circle cx="535.0" cy="176.8" r="3" fill="#fff" stroke="#1ab394" stroke-width="2"/><circle cx="557.3" cy="176.8" r="3" fill="#fff" stroke="#1ab394" stroke-width="2"/><circle cx="579.5" cy="176.8" r="3" fill="#fff" stroke="#1ab394" stroke-width="2"/><circle cx="601.8" cy="176.8" r="3" fill="#fff" stroke="#1ab394" stroke-width="2"/><circle cx="624.1" cy="176.8" r="3" fill="#fff" stroke="#1ab394" stroke-width="2"/><circle cx="646.4" cy="176.8" r="3" fill="#fff" stroke="#1ab394" stroke-width="2"/><circle cx="668.6" cy="176.8" r="3" fill="#fff" stroke="#1ab394" stroke-width="2"/></svg>
</article>
<article class="card" style="top:731px">
</article>
</section>
<section class="panel" style="left:788px">
<header class="panel-head">
<span style="position:absolute;left:15.3px;top:22.15px;font-size:14px;line-height:20px;letter-spacing:0.23px;color:#2c3e50;white-space:nowrap;">Contact Engagement</span>
<div class="igroup" style="left:294px;width:216px">
<span style="position:absolute;left:0;top:0;width:38px;height:32px;border-right:1px solid #d0d8e1;display:block"><svg style="position:absolute;left:11.50px;top:9.00px;" width="13" height="14" viewBox="0 0 13 14"><rect x=".6" y="2.600" width="11.800" height="10.800" rx=".8" fill="#fff" stroke="#2c3e50" stroke-width="1.150"/><rect x=".6" y="2.600" width="11.800" height="2.800" fill="#2c3e50"/><rect x="2.750" y=".4" width="1.900" height="3.900" rx=".95" fill="#fff" stroke="#2c3e50" stroke-width=".85"/><rect x="8.350" y=".4" width="1.900" height="3.900" rx=".95" fill="#fff" stroke="#2c3e50" stroke-width=".85"/></svg></span>
<span style="position:absolute;left:44.1px;top:7.00px;font-size:13px;line-height:20px;letter-spacing:0.23px;color:#1f4e85;white-space:nowrap;">03/14/2021 - 04/12/2021</span>
</div>
</header>
<article class="card" style="top:80px">
<svg style="position:absolute;left:14.90px;top:20.10px;" width="15" height="10" viewBox="0 0 15 10"><rect width="15" height="10" fill="#1c63b3"/><path fill="#fff" d="M3.300 1.300h8.400c0 1 .9 1.900 2 1.900v3.600c-1.100 0-2 .9-2 1.900H3.300c0-1-.9-1.900-2-1.900V3.200c1.100 0 2-.9 2-1.900z"/><ellipse cx="7.500" cy="5" rx="2.300" ry="2.700" fill="#1c63b3"/><path d="M6.900 4.100l.8-.6v3M6.700 6.600h1.800" stroke="#fff" stroke-width=".8" fill="none"/></svg>
<span style="position:absolute;left:43.9px;top:14.95px;font-size:14px;line-height:20px;letter-spacing:-0.2px;color:#1c63b3;white-space:nowrap;">Gross Sales</span>
<span style="position:absolute;left:40.2px;top:43.26px;font-size:31px;line-height:36px;letter-spacing:-0.18px;color:#1c63b3;white-space:nowrap;">$0</span>
<svg style="position:absolute;left:281.10px;top:94.40px;" width="28" height="18.5" viewBox="0 0 28 18.5"><g transform="scale(1.8667 1.8500)"><rect width="15" height="10" fill="#d9e0e7"/><path fill="#fff" d="M3.300 1.300h8.400c0 1 .9 1.900 2 1.900v3.600c-1.100 0-2 .9-2 1.900H3.300c0-1-.9-1.900-2-1.900V3.200c1.100 0 2-.9 2-1.900z"/><ellipse cx="7.500" cy="5" rx="2.300" ry="2.700" fill="#d9e0e7"/><path d="M6.900 4.100l.8-.6v3M6.700 6.600h1.800" stroke="#fff" stroke-width=".8" fill="none"/></g></svg>
<span style="position:absolute;left:319.6px;top:93.00px;font-size:13px;line-height:20px;letter-spacing:-0.04px;color:#b4bcc5;white-space:nowrap;">No Gross Sales</span>
</article>
<article class="card" style="top:297px">
<svg style="position:absolute;left:15.00px;top:18.10px;" width="13" height="14" viewBox="0 0 13 14"><rect x=".6" y="2.600" width="11.800" height="10.800" rx=".8" fill="#fff" stroke="#1c63b3" stroke-width="1.150"/><rect x=".6" y="2.600" width="11.800" height="2.800" fill="#1c63b3"/><rect x="2.750" y=".4" width="1.900" height="3.900" rx=".95" fill="#fff" stroke="#1c63b3" stroke-width=".85"/><rect x="8.350" y=".4" width="1.900" height="3.900" rx=".95" fill="#fff" stroke="#1c63b3" stroke-width=".85"/></svg>
<span style="position:absolute;left:41.6px;top:14.95px;font-size:14px;line-height:20px;letter-spacing:0.39px;color:#1c63b3;white-space:nowrap;">Appointments Set</span>
<span style="position:absolute;left:39.6px;top:43.26px;font-size:31px;line-height:36px;letter-spacing:-0.05px;color:#1c63b3;white-space:nowrap;">0</span>
<svg style="position:absolute;left:264.00px;top:90.90px;" width="24" height="25.6" viewBox="0 0 24 25.6"><g transform="scale(1.8462 1.8286)"><rect x=".6" y="2.600" width="11.800" height="10.800" rx=".8" fill="#fff" stroke="#d9e0e7" stroke-width="1.150"/><rect x=".6" y="2.600" width="11.800" height="2.800" fill="#d9e0e7"/><rect x="2.750" y=".4" width="1.900" height="3.900" rx=".95" fill="#fff" stroke="#d9e0e7" stroke-width=".85"/><rect x="8.350" y=".4" width="1.900" height="3.900" rx=".95" fill="#fff" stroke="#d9e0e7" stroke-width=".85"/></g></svg>
<span style="position:absolute;left:298.6px;top:92.90px;font-size:13px;line-height:20px;letter-spacing:0.5px;color:#b4bcc5;white-space:nowrap;">No Appointments Set</span>
</article>
<article class="card" style="top:514px">
<svg style="position:absolute;left:14.90px;top:18.30px;" width="14" height="12.5" viewBox="0 0 14 12.5"><path fill="#1c63b3" d="M14 8.300c0 1.300-.700 3-1.200 4-.1.200-.2.300-.4.200-.2 0-.2-.2-.2-.4.300-4-1.100-5.200-5.200-5.200H5.500v2.300c0 .2-.1.400-.3.500-.2.100-.4 0-.6-.1L.2 5.200c-.2-.2-.2-.6 0-.8L4.600.1c.2-.1.400-.2.600-.1.200.1.300.3.300.5v2.300H7c3 0 7 .5 7 5.500z"/></svg>
<span style="position:absolute;left:43.4px;top:14.95px;font-size:14px;line-height:20px;letter-spacing:0.08px;color:#1c63b3;white-space:nowrap;">Follow-ups Set</span>
<span style="position:absolute;left:39.6px;top:43.26px;font-size:31px;line-height:36px;letter-spacing:-0.05px;color:#1c63b3;white-space:nowrap;">0</span>
<svg style="position:absolute;left:272.90px;top:91.70px;" width="26.4" height="23.1" viewBox="0 0 26.4 23.1"><g transform="scale(1.8857 1.8480)"><path fill="#d9e0e7" d="M14 8.300c0 1.300-.700 3-1.200 4-.1.200-.2.300-.4.200-.2 0-.2-.2-.2-.4.300-4-1.100-5.200-5.200-5.200H5.500v2.300c0 .2-.1.400-.3.500-.2.100-.4 0-.6-.1L.2 5.200c-.2-.2-.2-.6 0-.8L4.600.1c.2-.1.400-.2.600-.1.200.1.300.3.300.5v2.300H7c3 0 7 .5 7 5.500z"/></g></svg>
<span style="position:absolute;left:309.6px;top:93.10px;font-size:13px;line-height:20px;letter-spacing:0.1px;color:#b4bcc5;white-space:nowrap;">No Follow-ups Set</span>
</article>
<article class="card" style="top:731px">
</article>
</section>
</div>
<svg class="annot" style="position:absolute;left:0;top:505px" width="300" height="70" viewBox="0 505 300 70"><rect x="4.450" y="516.650" width="280.400" height="47.800" fill="none" stroke="#ff2600" stroke-width="7.100" stroke-linejoin="round"/></svg>
<svg style="position:absolute;left:140px;top:610px;filter:drop-shadow(0 1px 1.5px rgba(0,0,0,.4))" width="90" height="50" viewBox="140 610 90 50"><path fill="#ff2600" d="M149.500 627.400L181.400 622.300L177 629.600C188 636 201 641.500 214 646.300a1.300 1.300 0 0 1-.6 2.500C200 646 186 643 173.200 642.200L172.900 650.100z"/></svg>
</body></html>
